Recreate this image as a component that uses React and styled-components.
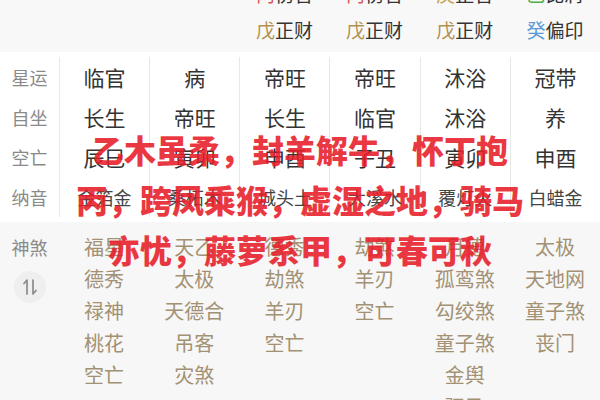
import React from "react";
import styled, { createGlobalStyle } from "styled-components";

const Global = createGlobalStyle`
  html, body { margin: 0; padding: 0; background: #f7f7f7; }
  body { font-family: "Noto Sans CJK SC", "Noto Sans", sans-serif; }
`;

const Page = styled.div`
  position: relative;
  width: 600px;
  height: 400px;
  overflow: hidden;
  background: #f7f7f7;
`;

const Grid = styled.div`
  display: grid;
  grid-template-columns: 59px repeat(6, 1fr);
`;

const TopSection = styled(Grid)`
  margin-top: -24px;
  padding-bottom: 4px;
  background: #f8f8f8;
`;

const TopCell = styled.div`
  height: 36px;
  line-height: 36px;
  text-align: center;
  font-size: 19px;
  color: #333;
  white-space: nowrap;
`;

const Stem = styled.span`
  color: ${(p) => p.$c};
`;

const Table = styled(Grid)`
  background: #fff;
  padding: 5px 0 5px;
`;

const Column = styled.div`
  display: flex;
  flex-direction: column;
  border-left: ${(p) => (p.$line ? "1px solid #e8e8e8" : "none")};
`;

const Cell = styled.div`
  height: 40px;
  line-height: 40px;
  text-align: center;
  white-space: nowrap;
  font-size: ${(p) => (p.$small ? "18px" : "21px")};
  color: ${(p) => (p.$small ? "#444" : "#333")};
`;

const Label = styled.div`
  height: ${(p) => p.$h || 40}px;
  line-height: ${(p) => p.$h || 40}px;
  text-align: center;
  font-size: 18px;
  color: #8a8a8a;
`;

const ShenshaSection = styled(Grid)`
  padding-top: 9px;
  background: #f7f7f7;
`;

const ShenshaCol = styled.div`
  display: flex;
  flex-direction: column;
`;

const Star = styled.div`
  height: 32px;
  line-height: 32px;
  text-align: center;
  font-size: 20px;
  color: #a39174;
  white-space: nowrap;
`;

const SwapButton = styled.div`
  width: 32px;
  height: 32px;
  margin: 8px auto 0;
  border-radius: 50%;
  background: #efefef;
  display: flex;
  align-items: center;
  justify-content: center;
`;

const Overlay = styled.div`
  position: absolute;
  left: 0;
  right: 0;
  top: 124px;
  text-align: center;
  font-size: 32px;
  line-height: 50px;
  font-weight: 900;
  color: rgba(232, 28, 40, 0.88);
  pointer-events: none;
`;

const OverlayLine = styled.div`
  white-space: nowrap;
`;

const topRows = [
  [null, null, ["丙", "#d9534f", "伤官"], ["丙", "#d9534f", "伤官"], ["庚", "#c2a052", "正官"], ["乙", "#4caf50", "比肩"]],
  [null, null, ["戊", "#b39152", "正财"], ["戊", "#b39152", "正财"], ["戊", "#b39152", "正财"], ["癸", "#5a9ad6", "偏印"]],
];

const labels = ["星运", "自坐", "空亡", "纳音"];
const pillars = [
  ["临官", "长生", "辰巳", "金箔金"],
  ["病", "帝旺", "寅卯", "桑柘木"],
  ["帝旺", "长生", "申酉", "城头土"],
  ["帝旺", "临官", "子丑", "大溪水"],
  ["沐浴", "沐浴", "寅卯", "覆灯火"],
  ["冠带", "养", "申酉", "白蜡金"],
];

const stars = [
  ["福星", "德秀", "禄神", "桃花", "空亡"],
  ["天乙", "太极", "天德合", "吊客", "灾煞"],
  ["德秀", "劫煞", "羊刃", "空亡"],
  ["劫煞", "羊刃", "空亡"],
  ["月德", "孤鸾煞", "勾绞煞", "童子煞", "金舆", "驿马"],
  ["太极", "天地网", "童子煞", "丧门"],
];

const SwapIcon = () => (
  <svg width="16" height="20" viewBox="0 0 16 20" fill="none" stroke="#8a8a8a" strokeWidth="1.7" strokeLinecap="round" strokeLinejoin="round">
    <path d="M5 17 V3 L2 6.5" />
    <path d="M11 3 V17 L14 13.5" />
  </svg>
);

export default function App() {
  return (
    <Page>
      <Global />
      <TopSection>
        {topRows.map((row, ri) =>
          [<TopCell key={`l${ri}`} />].concat(
            row.slice(0, 6).map((c, i) => (
              <TopCell key={`${ri}-${i}`}>
                {c ? (
                  <>
                    <Stem $c={c[1]}>{c[0]}</Stem>
                    {c[2]}
                  </>
                ) : null}
              </TopCell>
            ))
          )
        )}
      </TopSection>
      <Table>
        <Column>
          {labels.map((l) => (
            <Label key={l}>{l}</Label>
          ))}
        </Column>
        {pillars.map((p, i) => (
          <Column key={i} $line>
            {p.map((v, j) => (
              <Cell key={j} $small={j === 3}>
                {v}
              </Cell>
            ))}
          </Column>
        ))}
      </Table>
      <ShenshaSection>
        <ShenshaCol>
          <Label $h={32}>神煞</Label>
          <SwapButton>
            <SwapIcon />
          </SwapButton>
        </ShenshaCol>
        {stars.map((col, i) => (
          <ShenshaCol key={i}>
            {col.map((s, j) => (
              <Star key={j}>{s}</Star>
            ))}
          </ShenshaCol>
        ))}
      </ShenshaSection>
      <Overlay>
        <OverlayLine>乙木虽柔，封羊解牛，怀丁抱</OverlayLine>
        <OverlayLine>丙，跨凤乘猴，虚湿之地，骑马</OverlayLine>
        <OverlayLine>亦忧，藤萝系甲，可春可秋</OverlayLine>
      </Overlay>
    </Page>
  );
}
